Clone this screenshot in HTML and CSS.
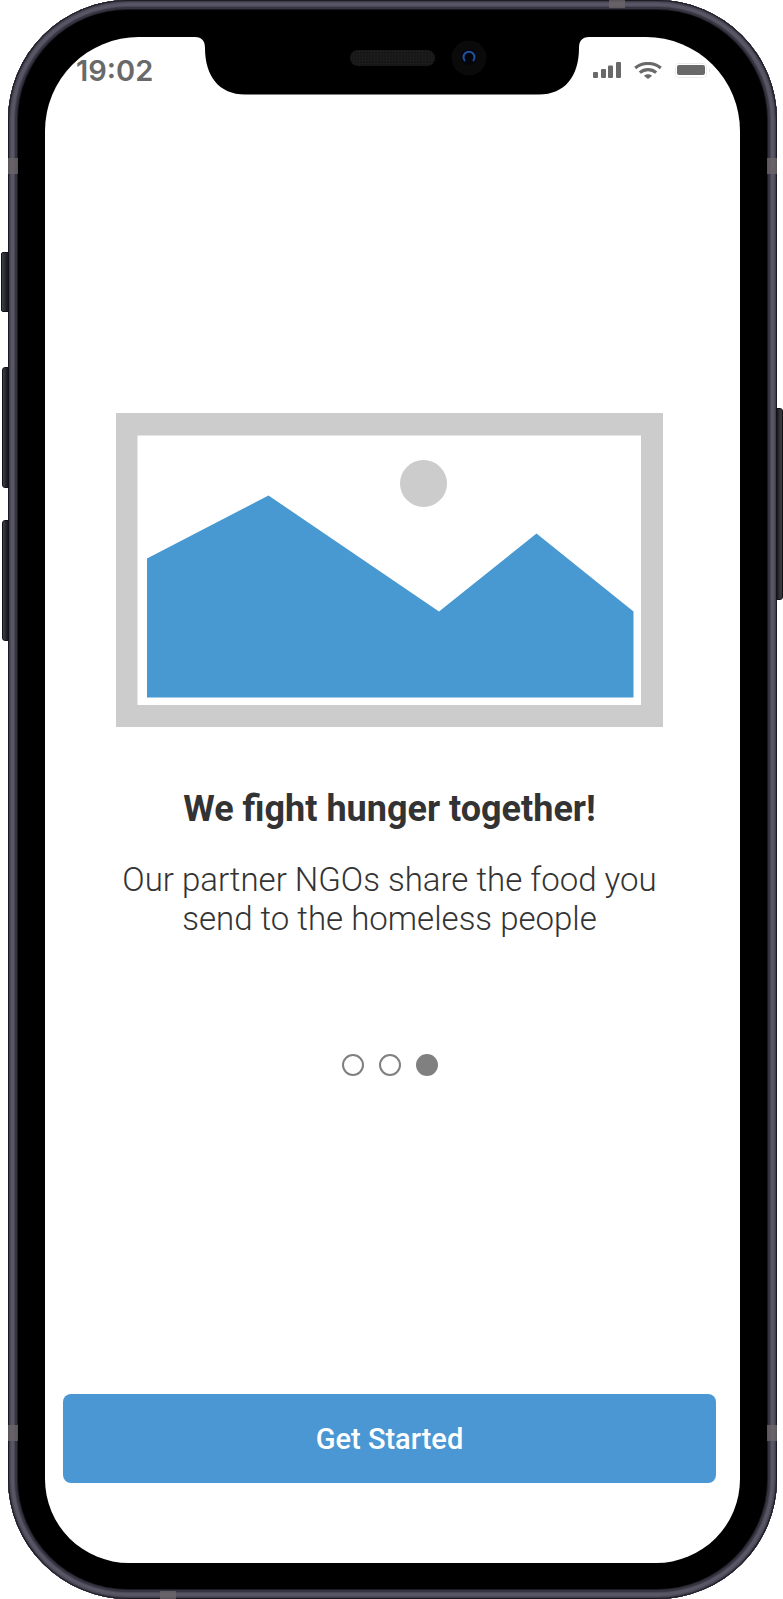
FILE: index.html
```html
<!DOCTYPE html>
<html lang="en">
<head>
<meta charset="utf-8">
<meta name="viewport" content="width=device-width, initial-scale=1">
<title>Get Started</title>
<link rel="stylesheet" href="styles.css">
</head>
<body>
<div class="phone">
  <span class="key key-mute"></span>
  <span class="key key-up"></span>
  <span class="key key-down"></span>
  <span class="key key-power"></span>
  <span class="band band-side band-left band-high"></span>
  <span class="band band-side band-left band-low"></span>
  <span class="band band-side band-right band-high"></span>
  <span class="band band-side band-right band-low"></span>
  <span class="band band-top"></span>
  <span class="band band-bottom"></span>
  <div class="bezel">
    <div class="screen">
      <header class="status">
        <time class="clock">19:02</time>
        <svg class="notch" viewBox="0 0 394 58" width="394" height="58" aria-hidden="true">
          <defs>
            <pattern id="mesh" width="3" height="3" patternUnits="userSpaceOnUse">
              <rect width="3" height="3" fill="#1d1c1d"/>
              <circle cx="1" cy="1" r="1" fill="#131313"/>
            </pattern>
          </defs>
          <path d="M0 0C7 0 10 4 10 11C10 39 24 57.500 50 57.500H344C370 57.500 384 39 384 11C384 4 387 0 394 0Z" fill="#000"/>
          <rect x="155" y="13" width="85" height="16" rx="8" fill="url(#mesh)"/>
          <circle cx="274" cy="21" r="17.500" fill="#0a0a0b"/>
          <circle cx="274" cy="20" r="8" fill="#05060c"/>
          <path d="M270 24A5.500 5.500 0 1 1 278 24" fill="none" stroke="#1d539f" stroke-width="2"/>
        </svg>
        <div class="indicators">
          <svg viewBox="0 0 28 17" width="28" height="17" role="img" aria-label="Signal" fill="#696969">
            <rect x="0" y="10" width="5" height="6" rx="1"/>
            <rect x="8" y="7" width="5" height="9" rx="1"/>
            <rect x="15" y="3.500" width="5" height="12.500" rx="1"/>
            <rect x="23" y="0" width="5" height="16" rx="1"/>
          </svg>
          <svg viewBox="0 0 28 17" width="28" height="17" role="img" aria-label="Wi-Fi" fill="none" stroke="#696969" stroke-width="3.200">
            <path d="M1.200 6C8.500 0 19.500 0 26.800 6"/>
            <path d="M5.800 10.600C10.500 6.600 17.500 6.600 22.200 10.600"/>
            <path d="M9.800 13.800C12.200 11.700 15.800 11.700 18.200 13.800L14 17Z" fill="#696969" stroke="none"/>
          </svg>
          <svg viewBox="0 0 36 15" width="36" height="15" role="img" aria-label="Battery">
            <rect x=".5" y=".5" width="31" height="14" rx="3" fill="#fff" stroke="#ececec"/>
            <rect x="2" y="2" width="28" height="10" rx="2" fill="#696969"/>
            <path d="M34 5.500Q36 7.500 34 9.500Z" fill="#d8d8d8"/>
          </svg>
        </div>
      </header>
      <main class="intro">
        <svg class="picture" viewBox="0 0 547 314" role="img" aria-label="Landscape picture">
          <path d="M0 0H547V314H0ZM21.500 22.500V292H525V22.500Z" fill="#ccc" fill-rule="evenodd"/>
          <circle cx="307.500" cy="70.500" r="23.500" fill="#ccc"/>
          <path d="M31 145.500L152.500 82.500L323 198.500L420.500 120.500L517.500 198.500V284.500H31Z" fill="#4899d1"/>
        </svg>
        <h1 class="title">We fight hunger together!</h1>
        <p class="lead">Our partner NGOs share the food you send to the homeless people</p>
        <div class="pager" role="radiogroup" aria-label="Intro page">
          <input class="dot" type="radio" name="page" aria-label="Page 1">
          <input class="dot" type="radio" name="page" aria-label="Page 2">
          <input class="dot" type="radio" name="page" aria-label="Page 3" checked>
        </div>
      </main>
      <footer class="actions">
        <button class="start" type="button">Get Started</button>
      </footer>
    </div>
  </div>
</div>
</body>
</html>
```
FILE: styles.css
```css
* {
  box-sizing: border-box;
}

body {
  margin: 0;
  background: #fff;
  font-family: Roboto, "Liberation Sans", sans-serif;
  color: #333;
}

/* Device frame */
.phone {
  position: relative;
  display: flex;
  min-height: 100vh;
  margin: 0 6px 0 8px;
  padding: 10px;
  border-radius: 120px;
  background: #21202a;
  box-shadow:
    inset 0 0 0 1px #1c1b24,
    inset 0 0 0 2px #3f3e4b,
    inset 0 0 0 3px #4d4b5a,
    inset 0 0 0 6px #585665,
    inset 0 0 0 7px #4a4856,
    inset 0 0 0 9px #353440,
    inset 0 0 0 11px #1b1a22;
}

.bezel {
  flex: 1;
  display: flex;
  padding: 27px 27px 26px;
  border-radius: 110px;
  background: #000;
}

.screen {
  flex: 1;
  display: flex;
  flex-direction: column;
  border-radius: 94px 94px 84px 84px;
  background: #fff;
}

.key {
  position: absolute;
  border: 1px solid #101015;
  background: linear-gradient(90deg, #3d424b, #23242d 60%, #15151b);
}

.key-mute {
  left: -7px;
  top: 252px;
  width: 8px;
  height: 60px;
  border-radius: 2px 0 0 2px;
}

.key-up,
.key-down {
  left: -6px;
  width: 7px;
  height: 121px;
  border-radius: 3px 0 0 3px;
}

.key-up {
  top: 367px;
}

.key-down {
  top: 520px;
}

.key-power {
  right: -6px;
  top: 408px;
  width: 7px;
  height: 192px;
  border-radius: 0 3px 3px 0;
  background: linear-gradient(90deg, #15151b, #30303a 50%, #3d3d3c);
}

.band {
  position: absolute;
  background: #6b6469;
  opacity: .8;
}

.band-side {
  width: 10px;
  height: 16px;
}

.band-left {
  left: 0;
}

.band-right {
  right: 0;
}

.band-high {
  top: 158px;
}

.band-low {
  bottom: 158px;
}

.band-top,
.band-bottom {
  width: 16px;
  height: 8px;
}

.band-top {
  top: 0;
  right: 152px;
}

.band-bottom {
  bottom: 0;
  left: 152px;
}

/* Status bar */
.status {
  display: grid;
  grid-template-columns: 1fr 394px 1fr;
  align-items: start;
  padding-right: 1px;
}

.clock {
  padding: 16px 0 0 31px;
  font: 600 29px/36px Inter, "Liberation Sans", sans-serif;
  color: #696969;
}

.notch {
  display: block;
}

.indicators {
  display: flex;
  align-items: center;
  gap: 13px;
  padding: 25px 0 0 4px;
}

.indicators svg {
  flex: none;
}

/* Intro page */
.intro {
  flex: 1;
  display: flex;
  flex-direction: column;
  align-items: center;
  padding: 318px 38px 0 32px;
}

.picture {
  display: block;
  width: 100%;
  max-width: 547px;
}

.title {
  margin: 60px 0 0;
  font-size: 36px;
  line-height: 44px;
  font-weight: 700;
  text-align: center;
}

.lead {
  max-width: 560px;
  margin: 29px 0 0;
  font-size: 33px;
  line-height: 39px;
  font-weight: 300;
  text-align: center;
}

.pager {
  display: flex;
  gap: 15px;
  margin-top: 116px;
}

.dot {
  appearance: none;
  width: 22px;
  height: 22px;
  margin: 0;
  border: 2px solid #808080;
  border-radius: 50%;
  background: #fff;
}

.dot:checked {
  background: #808080;
}

/* Bottom action */
.actions {
  padding: 0 24px 80px 18px;
}

.start {
  display: block;
  width: 100%;
  height: 89px;
  border: 0;
  border-radius: 8px;
  background: #4a97d3;
  color: #fff;
  font: 500 29px/36px Roboto, "Liberation Sans", sans-serif;
}
```
